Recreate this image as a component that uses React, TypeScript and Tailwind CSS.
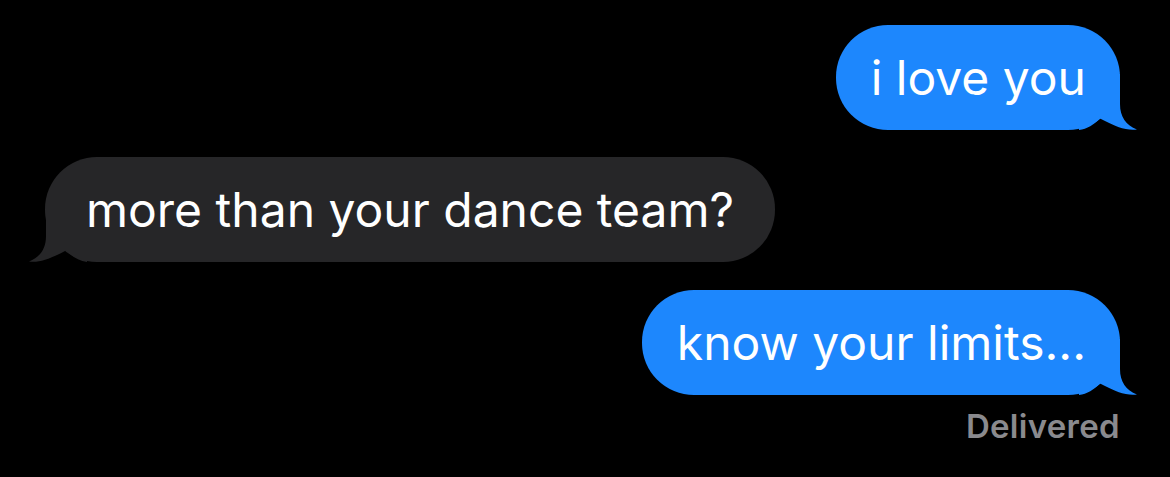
import React from "react";

function Tail({ side, color }: { side: "left" | "right"; color: string }) {
	const flip = side === "left";
	return (
		<svg
			className={
				flip
					? "absolute -left-[16px] bottom-0 h-[56px] w-[58px] -scale-x-100"
					: "absolute -right-[17px] bottom-0 h-[56px] w-[58px]"
			}
			viewBox="0 0 58 56"
			fill={color}
		>
			<path d="M0 0 H41 V30 C41 43 47 51 58 55.5 C48 57 37 53 21 44.5 C15 50.5 8 55 0 56 Z" />
		</svg>
	);
}

function Bubble({ text, mine }: { text: string; mine?: boolean }) {
	const color = mine ? "#1d87fd" : "#262628";
	return (
		<div
			className={
				mine
					? "relative rounded-[52px] bg-[#1d87fd] h-[105px] flex items-center pl-[35px] pr-[34px]"
					: "relative rounded-[52px] bg-[#262628] h-[105px] flex items-center pl-[41px] pr-[41px]"
			}
		>
			<Tail side={mine ? "right" : "left"} color={color} />
			<span className="relative text-white text-[48px] leading-none">
				{text}
			</span>
		</div>
	);
}

export default function App() {
	return (
		<div
			className="w-[1170px] h-[477px] bg-black overflow-hidden flex flex-col pt-[25px] pl-[45px] pr-[50px]"
			style={{ fontFamily: "Inter, 'Liberation Sans', sans-serif" }}
		>
			<div className="flex justify-end">
				<Bubble text="i love you" mine />
			</div>
			<div className="flex justify-start mt-[27px]">
				<Bubble text="more than your dance team?" />
			</div>
			<div className="flex justify-end mt-[28px]">
				<Bubble text="know your limits..." mine />
			</div>
			<div className="flex justify-end mt-[15px]">
				<span className="text-[#8a8a8e] text-[33px] font-semibold leading-none tracking-[0.3px]">
					Delivered
				</span>
			</div>
		</div>
	);
}
